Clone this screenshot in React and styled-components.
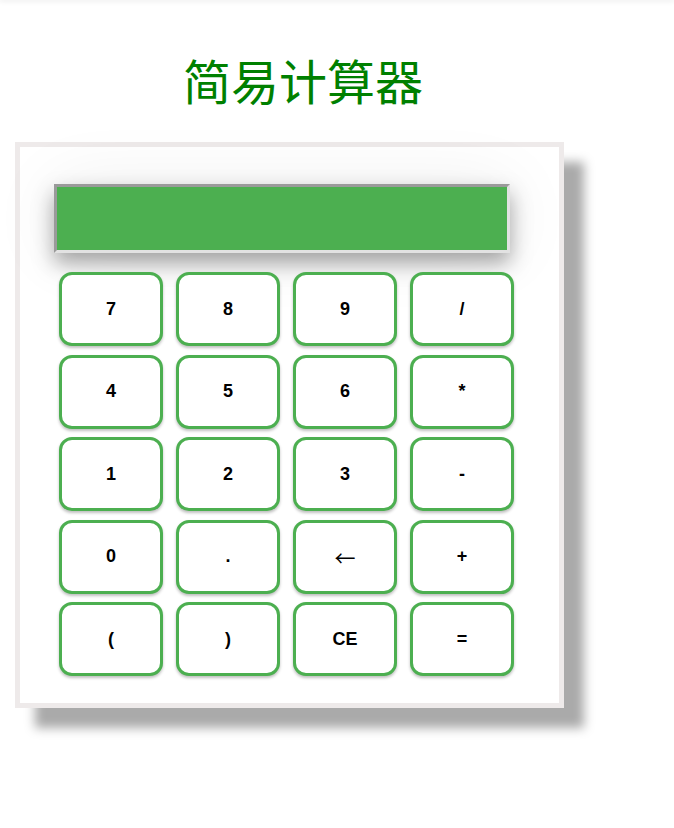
import React from "react";
import styled, { createGlobalStyle } from "styled-components";

const Global = createGlobalStyle`
  html, body { margin: 0; padding: 0; background: #fff; }
  body { font-family: "Liberation Sans", Arial, sans-serif; }
`;

const TopShade = styled.div`
  height: 0;
  box-shadow: 0 0 5px 1px rgba(0, 0, 0, 0.12);
`;

const Page = styled.div`
  padding: 55px 0 40px 15px;
  width: 674px;
  box-sizing: border-box;
`;

const Title = styled.h1`
  margin: 0 0 39px 0;
  width: 576px;
  text-align: center;
  font-family: "Noto Sans CJK SC", "Noto Sans CJK JP", sans-serif;
  font-size: 48px;
  line-height: 48px;
  font-weight: 400;
  color: #008000;
`;

const Calculator = styled.div`
  width: 549px;
  height: 566px;
  box-sizing: border-box;
  border: 5px solid #eeeaea;
  background: #fff;
  box-shadow: 20px 20px 10px #aaa;
  padding: 37px 0 0 34px;
`;

const Display = styled.div`
  width: 456px;
  height: 69px;
  box-sizing: border-box;
  background: #4caf50;
  border-style: solid;
  border-width: 3px;
  border-color: #9a9a9a #e2e2e2 #e2e2e2 #9a9a9a;
  box-shadow: 0 10px 20px rgba(0, 0, 0, 0.35), 0 0 70px rgba(0, 0, 0, 0.07);
  margin-bottom: 19px;
`;

const Keys = styled.div`
  display: grid;
  grid-template-columns: repeat(4, 104px);
  grid-auto-rows: 74px;
  column-gap: 13px;
  row-gap: 8.6px;
  margin-left: 5px;
`;

const Key = styled.button`
  box-sizing: border-box;
  margin: 0;
  padding: 0;
  background: #fff;
  border: 3px solid #4caf50;
  border-radius: 13px;
  box-shadow: 0 2px 3px rgba(0, 0, 0, 0.25);
  font-family: ${(p) =>
    p.$light
      ? `"Noto Sans CJK SC", "DejaVu Sans", sans-serif`
      : `"Liberation Sans", Arial, sans-serif`};
  font-size: ${(p) => (p.$light ? "21px" : "18px")};
  font-weight: ${(p) => (p.$light ? 400 : 700)};
  color: #000;
  display: flex;
  align-items: center;
  justify-content: center;
  cursor: pointer;
`;

const keys = [
  "7", "8", "9", "/",
  "4", "5", "6", "*",
  "1", "2", "3", "-",
  "0", ".", "←", "+",
  "(", ")", "CE", "=",
];

export default function App() {
  return (
    <>
      <Global />
      <TopShade />
      <Page>
        <Title>简易计算器</Title>
        <Calculator>
          <Display />
          <Keys>
            {keys.map((k) => (
              <Key key={k} $light={k === "←"}>
                {k}
              </Key>
            ))}
          </Keys>
        </Calculator>
      </Page>
    </>
  );
}
